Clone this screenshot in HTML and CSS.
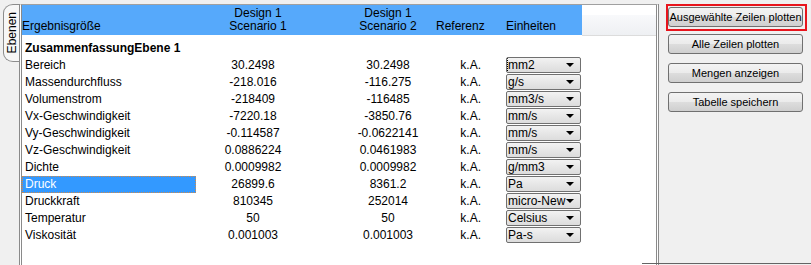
FILE: index.html
```html
<!DOCTYPE html>
<html lang="de">

<head>
  <meta charset="UTF-8">
  <title>Ergebnisse</title>
  <link rel="stylesheet" href="styles.css">
</head>

<body>
  <div class="window">
    <div class="side-tabs">
      <div class="side-tab"><span>Ebenen</span></div>
    </div>

    <div class="grid-panel">
      <table class="result-table">
        <colgroup>
          <col class="col-name">
          <col class="col-s1">
          <col class="col-s2">
          <col class="col-ref">
          <col class="col-unit">
          <col class="col-rest">
        </colgroup>
        <thead>
          <tr>
            <th class="name">Ergebnisgröße</th>
            <th class="s1">Design 1<br>Scenario 1</th>
            <th class="s2">Design 1<br>Scenario 2</th>
            <th class="ref">Referenz</th>
            <th class="unit">Einheiten</th>
            <th class="rest"></th>
          </tr>
        </thead>
        <tbody>
          <tr class="group-row">
            <td class="name" colspan="6">ZusammenfassungEbene 1</td>
          </tr>
          <tr>
            <td class="name">Bereich</td>
            <td class="s1">30.2498</td>
            <td class="s2">30.2498</td>
            <td class="ref">k.A.</td>
            <td class="unit"><div class="combo focused"><span>mm2</span><i></i></div></td>
            <td></td>
          </tr>
          <tr>
            <td class="name">Massendurchfluss</td>
            <td class="s1">-218.016</td>
            <td class="s2">-116.275</td>
            <td class="ref">k.A.</td>
            <td class="unit"><div class="combo"><span>g/s</span><i></i></div></td>
            <td></td>
          </tr>
          <tr>
            <td class="name">Volumenstrom</td>
            <td class="s1">-218409</td>
            <td class="s2">-116485</td>
            <td class="ref">k.A.</td>
            <td class="unit"><div class="combo"><span>mm3/s</span><i></i></div></td>
            <td></td>
          </tr>
          <tr>
            <td class="name">Vx-Geschwindigkeit</td>
            <td class="s1">-7220.18</td>
            <td class="s2">-3850.76</td>
            <td class="ref">k.A.</td>
            <td class="unit"><div class="combo"><span>mm/s</span><i></i></div></td>
            <td></td>
          </tr>
          <tr>
            <td class="name">Vy-Geschwindigkeit</td>
            <td class="s1">-0.114587</td>
            <td class="s2">-0.0622141</td>
            <td class="ref">k.A.</td>
            <td class="unit"><div class="combo"><span>mm/s</span><i></i></div></td>
            <td></td>
          </tr>
          <tr>
            <td class="name">Vz-Geschwindigkeit</td>
            <td class="s1">0.0886224</td>
            <td class="s2">0.0461983</td>
            <td class="ref">k.A.</td>
            <td class="unit"><div class="combo"><span>mm/s</span><i></i></div></td>
            <td></td>
          </tr>
          <tr>
            <td class="name">Dichte</td>
            <td class="s1">0.0009982</td>
            <td class="s2">0.0009982</td>
            <td class="ref">k.A.</td>
            <td class="unit"><div class="combo"><span>g/mm3</span><i></i></div></td>
            <td></td>
          </tr>
          <tr class="selected">
            <td class="name"><div class="sel">Druck</div></td>
            <td class="s1">26899.6</td>
            <td class="s2">8361.2</td>
            <td class="ref">k.A.</td>
            <td class="unit"><div class="combo"><span>Pa</span><i></i></div></td>
            <td></td>
          </tr>
          <tr>
            <td class="name">Druckkraft</td>
            <td class="s1">810345</td>
            <td class="s2">252014</td>
            <td class="ref">k.A.</td>
            <td class="unit"><div class="combo"><span>micro-New</span><i></i></div></td>
            <td></td>
          </tr>
          <tr>
            <td class="name">Temperatur</td>
            <td class="s1">50</td>
            <td class="s2">50</td>
            <td class="ref">k.A.</td>
            <td class="unit"><div class="combo"><span>Celsius</span><i></i></div></td>
            <td></td>
          </tr>
          <tr>
            <td class="name">Viskosität</td>
            <td class="s1">0.001003</td>
            <td class="s2">0.001003</td>
            <td class="ref">k.A.</td>
            <td class="unit"><div class="combo"><span>Pa-s</span><i></i></div></td>
            <td></td>
          </tr>
        </tbody>
      </table>
    </div>

    <div class="actions">
      <div class="highlight">
        <button class="btn">Ausgewählte Zeilen plotten</button>
      </div>
      <button class="btn">Alle Zeilen plotten</button>
      <button class="btn">Mengen anzeigen</button>
      <button class="btn">Tabelle speichern</button>
      <div class="status-line"></div>
    </div>
  </div>
</body>

</html>
```

FILE: styles.css
```css
* {
  margin: 0;
  padding: 0;
  box-sizing: border-box;
}

body {
  font-family: 'Liberation Sans', Arial, sans-serif;
  font-size: 12px;
  color: #000;
  background: #f0f0f0;
  width: 811px;
  height: 265px;
  overflow: hidden;
}

.window {
  display: flex;
  height: 265px;
}

/* vertical tab strip */
.side-tabs {
  width: 19px;
  padding: 4px 0 0 3px;
}

.side-tab {
  width: 16px;
  height: 58px;
  border: 1px solid #8c8c8c;
  border-right: none;
  border-radius: 10px 0 0 10px / 9px 0 0 9px;
  background: #f7f7f7;
  display: flex;
  align-items: center;
  justify-content: center;
}

.side-tab span {
  writing-mode: vertical-rl;
  transform: rotate(180deg);
  font-size: 12px;
  color: #000;
}

/* result grid */
.grid-panel {
  width: 640px;
  margin-top: 4px;
  background: #fff;
  border-top: 1px solid #a0a0a0;
  border-left: 3px double #8a8a8a;
  border-right: 3px double #8a8a8a;
}

.result-table {
  border-collapse: collapse;
  table-layout: fixed;
  width: 634px;
}

.col-name { width: 174px; }
.col-s1 { width: 114px; }
.col-s2 { width: 126px; }
.col-ref { width: 48px; }
.col-unit { width: 98px; }
.col-rest { width: 74px; }

.result-table th {
  height: 30px;
  font-weight: normal;
  background: #56a9fb;
  vertical-align: bottom;
  line-height: 13px;
  padding-bottom: 2px;
  white-space: nowrap;
}

.result-table th.name {
  text-align: left;
  padding-left: 0;
}

.result-table th.s1 {
  text-align: center;
  padding-left: 10px;
}

.result-table th.s2 {
  text-align: center;
  padding-left: 30px;
}

.result-table th.ref {
  text-align: right;
  padding-right: 2px;
}

.result-table th.unit {
  text-align: left;
  padding-left: 22px;
}

.result-table th.rest {
  background: linear-gradient(#fff 0, #fff 10px, #f8f9fb 10px, #eef0f3 100%);
  border-bottom: 1px solid #dcdcdc;
}

.result-table td {
  height: 17px;
  line-height: 17px;
  padding: 0;
  white-space: nowrap;
  overflow: hidden;
}

.group-row td {
  height: 21px;
  padding-top: 4px;
  font-weight: bold;
}

td.name {
  padding-left: 3px;
}

td.s1 {
  text-align: center;
}

td.s2 {
  text-align: center;
  padding-left: 30px;
}

td.ref {
  text-align: right;
  padding-right: 3px;
}

td.unit {
  padding-left: 22px;
}

.selected td.name {
  padding-left: 0;
}

.sel {
  background: #3399ff;
  color: #fff;
  height: 17px;
  padding-left: 3px;
  outline: 1px dotted #d08a4a;
  outline-offset: -1px;
}

/* unit combo box */
.combo {
  position: relative;
  width: 75px;
  height: 16px;
  border: 1px solid #707070;
  border-radius: 2px;
  background: linear-gradient(#f2f2f2, #dcdcdc);
  line-height: 14px;
  padding-left: 1px;
  overflow: hidden;
}

.combo span {
  display: block;
  width: 60px;
  overflow: hidden;
}

.combo i {
  position: absolute;
  right: 6px;
  top: 5px;
  border-left: 4px solid transparent;
  border-right: 4px solid transparent;
  border-top: 4px solid #000;
}

.combo.focused span {
  outline: 1px dotted #000;
  width: 72px;
}

/* action buttons */
.actions {
  flex: 1;
  position: relative;
  padding: 4px 0 0 7px;
  display: flex;
  flex-direction: column;
}

.highlight {
  width: 141px;
  height: 27px;
  border: 2px solid #e8141c;
  padding-top: 1px;
}

.btn {
  display: block;
  width: 135px;
  height: 20px;
  margin-left: 2px;
  margin-top: 3px;
  margin-bottom: 6px;
  padding: 0;
  white-space: nowrap;
  font-family: 'Liberation Sans', Arial, sans-serif;
  font-size: 11px;
  color: #000;
  border: 1px solid #707070;
  border-radius: 3px;
  background: linear-gradient(#f3f3f3 0%, #ebebeb 50%, #dddddd 51%, #cfcfcf 100%);
}

.highlight .btn {
  margin: 0;
}

.status-line {
  position: absolute;
  left: -17px;
  right: 0;
  bottom: 1px;
  border-top: 1px solid #646464;
}
```
